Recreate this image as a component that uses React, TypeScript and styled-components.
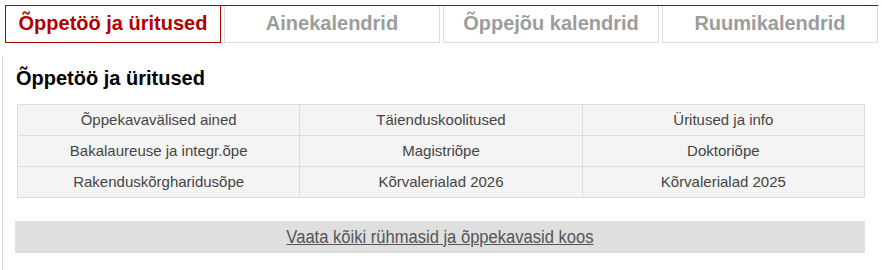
import styled, { createGlobalStyle } from "styled-components";

const GlobalStyle = createGlobalStyle`
  html, body {
    margin: 0;
    padding: 0;
    background: #ffffff;
    font-family: "Liberation Sans", Arial, sans-serif;
  }
`;

const tabs = [
  "Õppetöö ja üritused",
  "Ainekalendrid",
  "Õppejõu kalendrid",
  "Ruumikalendrid",
];

const rows = [
  ["Õppekavavälised ained", "Täienduskoolitused", "Üritused ja info"],
  ["Bakalaureuse ja integr.õpe", "Magistriõpe", "Doktoriõpe"],
  ["Rakenduskõrgharidusõpe", "Kõrvalerialad 2026", "Kõrvalerialad 2025"],
];

function App() {
  return (
    <>
      <GlobalStyle />
      <TabBar>
        {tabs.map((t, i) => (
          <Tab key={t} active={i === 0}>
            {t}
          </Tab>
        ))}
      </TabBar>
      <Panel>
        <Heading>Õppetöö ja üritused</Heading>
        <LinkTable>
          <tbody>
            {rows.map((r, i) => (
              <tr key={i}>
                {r.map((c) => (
                  <Cell key={c}>
                    <a href="#">{c}</a>
                  </Cell>
                ))}
              </tr>
            ))}
          </tbody>
        </LinkTable>
        <AllBar>
          <a href="#">Vaata kõiki rühmasid ja õppekavasid koos</a>
        </AllBar>
      </Panel>
    </>
  );
}

export default App;

const TabBar = styled.div`
  display: flex;
  gap: 3px;
  margin: 5px 4px 0 5px;
  border-top: 1px solid #aa0000;
`;

const Tab = styled.div<{ active?: boolean }>`
  flex: 1;
  height: 36px;
  display: flex;
  align-items: center;
  justify-content: center;
  padding-bottom: 1px;
  box-sizing: border-box;
  height: 37px;
  font-size: 20px;
  font-weight: bold;
  color: ${(p) => (p.active ? "#b00000" : "#9c9c9c")};
  border: 1px solid ${(p) => (p.active ? "#aa0000" : "#dddddd")};
  border-top: none;
  cursor: pointer;
`;

const Panel = styled.div`
  margin: 12px 0 0 2px;
  border-left: 1px solid #dddddd;
  padding: 12px 17px 20px 12px;
  width: 850px;
`;

const Heading = styled.h2`
  margin: 0 0 14px 1px;
  font-size: 20px;
  line-height: 23px;
  font-weight: bold;
  color: #000000;
`;

const LinkTable = styled.table`
  border-collapse: collapse;
  width: 848px;
  margin-left: 2px;
  table-layout: fixed;
`;

const Cell = styled.td`
  background: #f4f4f4;
  border: 1px solid #dddddd;
  text-align: center;
  font-size: 15px;
  line-height: 18px;
  padding: 6px 4px 6px;

  a {
    color: #444444;
    text-decoration: none;
  }
`;

const AllBar = styled.div`
  margin-top: 23px;
  height: 32px;
  display: flex;
  align-items: center;
  justify-content: center;
  background: #dfdfdf;

  a {
    display: inline-block;
    font-size: 18px;
    color: #555555;
    text-decoration: underline;
    transform: scaleX(0.92);
  }
`;
